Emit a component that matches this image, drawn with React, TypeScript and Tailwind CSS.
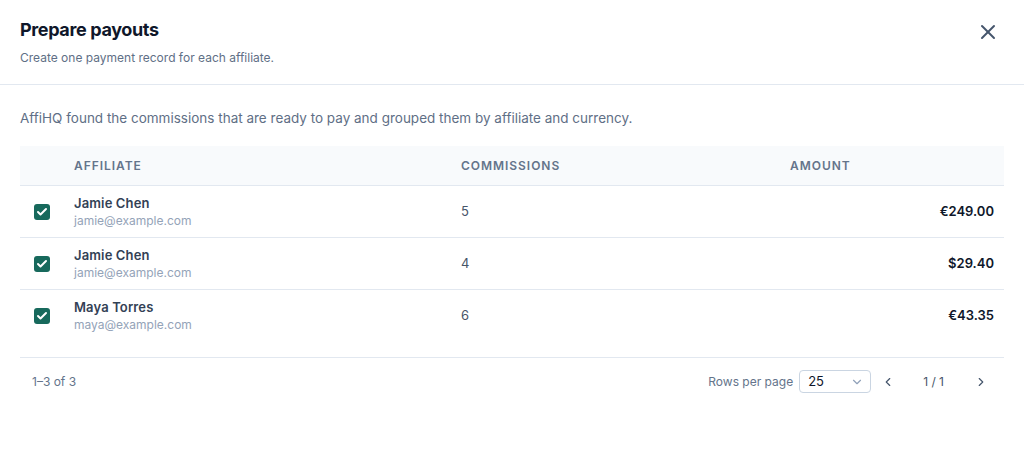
import React, { useState } from 'react';
import { X, Check, ChevronDown, ChevronLeft, ChevronRight } from 'lucide-react';

interface PayoutRow {
  id: number;
  name: string;
  email: string;
  commissions: number;
  amount: string;
}

const rows: PayoutRow[] = [
  { id: 1, name: 'Jamie Chen', email: 'jamie@example.com', commissions: 5, amount: '€249.00' },
  { id: 2, name: 'Jamie Chen', email: 'jamie@example.com', commissions: 4, amount: '$29.40' },
  { id: 3, name: 'Maya Torres', email: 'maya@example.com', commissions: 6, amount: '€43.35' },
];

const Checkbox: React.FC<{ checked: boolean; onChange: () => void }> = ({ checked, onChange }) => (
  <button
    type="button"
    onClick={onChange}
    className={`w-4 h-4 rounded-[3px] flex items-center justify-center ${
      checked ? 'bg-[#17695c]' : 'border border-slate-300 bg-white'
    }`}
  >
    {checked && <Check className="w-3 h-3 text-white" strokeWidth={4} />}
  </button>
);

export default function App() {
  const [selected, setSelected] = useState<number[]>([1, 2, 3]);

  const toggle = (id: number) =>
    setSelected((s) => (s.includes(id) ? s.filter((x) => x !== id) : [...s, id]));

  return (
    <div className="w-[1024px] h-[460px] bg-white text-slate-700 font-['Inter',sans-serif] overflow-hidden">
      {/* Header */}
      <div className="flex items-start justify-between pl-5 pr-6 pt-[19px] pb-[19px] border-b border-slate-200">
        <div>
          <h2 className="text-[18px] leading-[22px] font-bold tracking-[-0.02em] text-[#0f172a]">Prepare payouts</h2>
          <p className="mt-[10px] text-[12px] leading-[14px] text-[#5f6f86]">
            Create one payment record for each affiliate.
          </p>
        </div>
        <button type="button" className="mt-[1px] text-slate-600">
          <X className="w-6 h-6" strokeWidth={2} />
        </button>
      </div>

      {/* Body */}
      <div className="px-5 pt-[24px]">
        <p className="text-[13.5px] leading-[18px] text-[#5f6f86]">
          AffiHQ found the commissions that are ready to pay and grouped them by affiliate and currency.
        </p>

        <div className="mt-[19px]">
          <div className="grid grid-cols-[40px_387px_329px_1fr] h-10 items-center bg-[#f8fafc] border-b border-slate-200 text-[12px] font-semibold uppercase tracking-[0.08em] text-[#64748b]">
            <div />
            <div className="pl-[14px]">Affiliate</div>
            <div className="pl-[14px]">Commissions</div>
            <div className="pl-[14px]">Amount</div>
          </div>
          {rows.map((r, i) => (
            <div
              key={r.id}
              className={`grid grid-cols-[40px_387px_329px_1fr] h-[52px] items-center ${
                i < rows.length - 1 ? 'border-b border-slate-200' : ''
              }`}
            >
              <div className="pl-[14px] flex items-center">
                <Checkbox checked={selected.includes(r.id)} onChange={() => toggle(r.id)} />
              </div>
              <div className="pl-[14px]">
                <div className="text-[13px] leading-[18px] font-semibold tracking-[0.01em] text-[#334155]">{r.name}</div>
                <div className="text-[12px] leading-[18px] text-[#94a3b8]">{r.email}</div>
              </div>
              <div className="pl-[14px] text-[13px] text-[#475569]">{r.commissions}</div>
              <div className="pr-[10px] text-right text-[13px] font-semibold text-[#0f172a]">{r.amount}</div>
            </div>
          ))}
        </div>

        {/* Footer */}
        <div className="mt-[15px] border-t border-slate-200 h-12 flex items-center justify-between pl-3 pr-[12px]">
          <span className="text-[12px] text-[#64748b]">1–3 of 3</span>
          <div className="flex items-center">
            <span className="text-[12px] text-[#64748b]">Rows per page</span>
            <div className="ml-[6px] w-[72px] h-[23px] border border-slate-300 rounded-[4px] flex items-center justify-between pl-2 pr-[6px]">
              <span className="text-[13px] text-[#0f172a]">25</span>
              <ChevronDown className="w-[14px] h-[14px] text-slate-400" />
            </div>
            <button type="button" className="ml-[6px] p-1 text-slate-600">
              <ChevronLeft className="w-[14px] h-[14px]" />
            </button>
            <span className="ml-[24px] text-[12px] text-[#475569]">1 / 1</span>
            <button type="button" className="ml-[26px] p-1 text-slate-600">
              <ChevronRight className="w-[14px] h-[14px]" />
            </button>
          </div>
        </div>
      </div>
    </div>
  );
}
